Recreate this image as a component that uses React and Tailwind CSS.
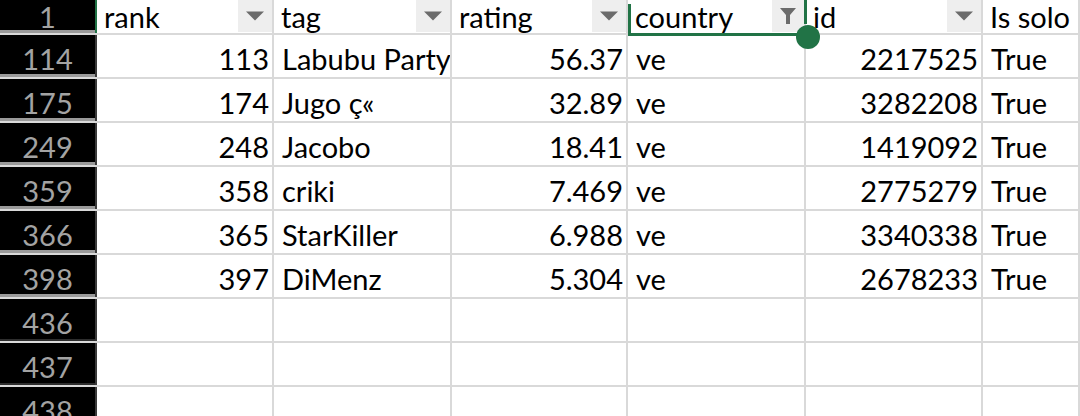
const rows = [
  { n: '114', rank: '113', tag: 'Labubu Party', rating: '56.37', country: 've', id: '2217525', solo: 'True', gap: true },
  { n: '175', rank: '174', tag: 'Jugo ç«', rating: '32.89', country: 've', id: '3282208', solo: 'True', gap: true },
  { n: '249', rank: '248', tag: 'Jacobo', rating: '18.41', country: 've', id: '1419092', solo: 'True', gap: true },
  { n: '359', rank: '358', tag: 'criki', rating: '7.469', country: 've', id: '2775279', solo: 'True', gap: true },
  { n: '366', rank: '365', tag: 'StarKiller', rating: '6.988', country: 've', id: '3340338', solo: 'True', gap: true },
  { n: '398', rank: '397', tag: 'DiMenz', rating: '5.304', country: 've', id: '2678233', solo: 'True', gap: true },
  { n: '436', gap: false },
  { n: '437', gap: false },
  { n: '438', gap: false },
];

function Arrow() {
  return (
    <span className="flex h-[32px] w-[34px] shrink-0 items-center justify-center bg-[#eeeeee]">
      <svg width="18" height="10" viewBox="0 0 18 10">
        <path d="M0 0.5 L18 0.5 L9 9.5 Z" fill="#6b6b6b" />
      </svg>
    </span>
  );
}

function Funnel() {
  return (
    <span className="flex h-[32px] w-[32px] shrink-0 items-center justify-center bg-[#eeeeee]">
      <svg width="16" height="18" viewBox="0 0 16 18">
        <path d="M0 1 L16 1 L10 8 L10 17 L6 17 L6 8 Z" fill="#6b6b6b" />
      </svg>
    </span>
  );
}

function Head({ label, w, icon = 'arrow' }) {
  return (
    <div className={`flex h-full ${w} shrink-0 items-start justify-between border-r-2 border-[#d9d9d9] pl-[7px]`}>
      <span className="pt-[1px] leading-[32px]">{label}</span>
      {icon === 'arrow' && <Arrow />}
      {icon === 'funnel' && <Funnel />}
    </div>
  );
}

function Cell({ w, right, children }) {
  return (
    <div
      className={`flex h-full ${w} shrink-0 items-center overflow-hidden whitespace-nowrap border-r-2 border-[#d9d9d9] pt-[5px] ${
        right ? 'justify-end pr-[3px]' : 'pl-[8px]'
      }`}
    >
      {children}
    </div>
  );
}

export default function App() {
  return (
    <div
      className="relative h-[416px] w-[1080px] overflow-hidden bg-white text-[29px] text-black"
      style={{ fontFamily: 'Lato, "Open Sans", sans-serif' }}
    >
      {/* header row */}
      <div className="flex h-[35px] border-b-2 border-[#d9d9d9]">
        <div className="flex h-full w-[97px] shrink-0 items-center justify-center border-r-2 border-[#217346] bg-black text-[#a3a3a3] shadow-[inset_0_-3px_0_#9a9a9a]">
          1
        </div>
        <Head label="rank" w="w-[177px]" />
        <Head label="tag" w="w-[178px]" />
        <Head label="rating" w="w-[176px]" />
        <Head label="country" w="w-[178px]" icon="funnel" />
        <Head label="id" w="w-[177px]" />
        <Head label="Is solo" w="flex-1" icon="none" />
      </div>

      {rows.map((r) => (
        <div key={r.n} className="flex h-[44px] border-b-2 border-[#d9d9d9]">
          <div
            className={`flex h-full w-[97px] shrink-0 items-center justify-center border-r-2 border-[#3a3a3a] bg-black pt-[5px] text-[#a3a3a3] ${
              r.gap ? 'shadow-[inset_0_-3px_0_#9a9a9a]' : 'shadow-[inset_0_-2px_0_#2e2e2e]'
            }`}
          >
            {r.n}
          </div>
          <Cell w="w-[177px]" right>{r.rank}</Cell>
          <Cell w="w-[178px]">{r.tag}</Cell>
          <Cell w="w-[176px]" right>{r.rating}</Cell>
          <Cell w="w-[178px]">{r.country}</Cell>
          <Cell w="w-[177px]" right>{r.id}</Cell>
          <Cell w="flex-1">{r.solo}</Cell>
        </div>
      ))}

      {/* selection outline on country header */}
      <div className="absolute left-[628px] top-[4px] h-[32px] w-[3px] bg-[#217346]" />
      <div className="absolute left-[628px] top-[33px] h-[3px] w-[176px] bg-[#217346]" />
      <div className="absolute left-[804px] top-0 h-[24px] w-[3px] bg-[#217346]" />
      <div className="absolute left-[796px] top-[25px] h-[24px] w-[24px] rounded-full bg-[#217346]" />
    </div>
  );
}
